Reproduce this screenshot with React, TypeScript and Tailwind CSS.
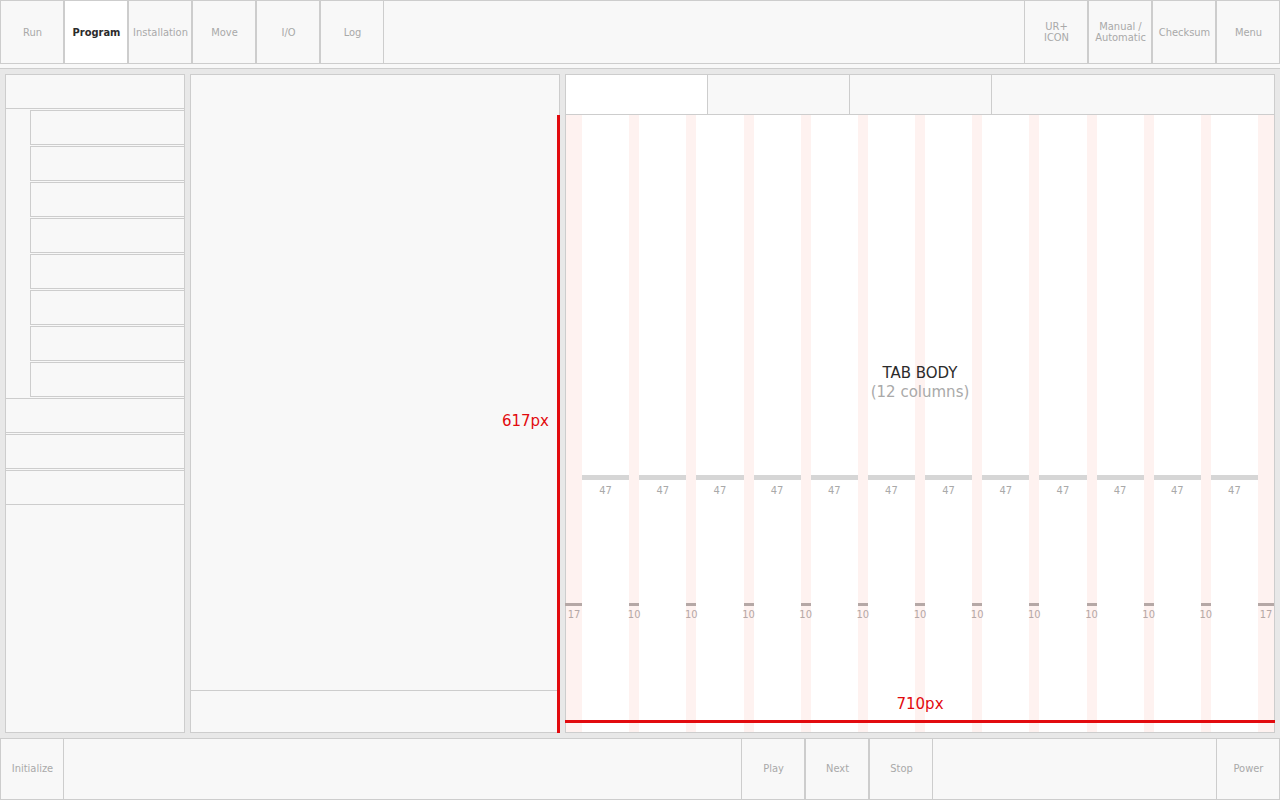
import { Fragment } from "react";
import clsx from "clsx";

const leftTabs = ["Run", "Program", "Installation", "Move", "I/O", "Log"];
const rightTabs = ["UR+\nICON", "Manual /\nAutomatic", "Checksum", "Menu"];
const playback = ["Play", "Next", "Stop"];
const columns = Array.from({ length: 12 }, (_, i) => i);

function BarButton({ label, active = false }: { label: string; active?: boolean }) {
  return (
    <button
      type="button"
      aria-pressed={active}
      className={clsx(
        "flex w-16 shrink-0 items-center justify-center self-stretch whitespace-pre-line border-x border-[#cdcdcd] pl-px text-center text-[11px] leading-[11px]",
        active ? "bg-white font-bold text-[#2b2b2b]" : "text-[#a9a9a9]",
      )}
    >
      {label}
    </button>
  );
}

function Gutter({ value, edge = false }: { value: number; edge?: boolean }) {
  return (
    <div className="flex flex-col items-center bg-[#fef2f0] pt-[488px]">
      <div className={clsx("h-[3px] bg-[#b5a8a6]", edge ? "-ml-px w-[17px]" : "w-full")} />
      <span className="mt-[3px] text-[11px] leading-3 text-[#b5a8a6]">{value}</span>
    </div>
  );
}

function Column() {
  return (
    <div className="flex flex-col items-center pt-[360px]">
      <div className="h-[5px] w-full bg-[#d6d6d6]" />
      <span className="mt-[5px] text-[11px] leading-3 text-[#a9a9a9]">47</span>
    </div>
  );
}

function Tree() {
  return (
    <aside className="flex w-[180px] shrink-0 flex-col border border-[#cdcdcd] bg-[#f8f8f8]">
      <div className="h-[34px] border-b border-[#cdcdcd]" />
      <ul className="ml-6 mt-px flex flex-col gap-px">
        {Array.from({ length: 8 }, (_, i) => (
          <li key={i} className="h-[35px] border-y border-l border-[#cdcdcd]" />
        ))}
      </ul>
      <ul className="mt-px flex flex-col gap-px">
        {Array.from({ length: 3 }, (_, i) => (
          <li key={i} className="h-[35px] border-y border-[#cdcdcd]" />
        ))}
      </ul>
    </aside>
  );
}

function TabPanel() {
  return (
    <section className="flex min-w-0 flex-1 flex-col border border-[#cdcdcd] bg-[#f8f8f8]">
      <div role="tablist" className="flex h-10 border-b border-[#cdcdcd]">
        {[0, 1, 2].map((tab) => (
          <button
            key={tab}
            type="button"
            role="tab"
            aria-label={`Tab ${tab + 1}`}
            aria-selected={tab === 0}
            className={clsx("w-[142px] border-r border-[#cdcdcd]", tab === 0 && "bg-white")}
          />
        ))}
      </div>
      <div className="relative grid flex-1 grid-cols-[16px_repeat(11,minmax(0,1fr)_10px)_minmax(0,1fr)_16px] bg-white">
        <Gutter value={17} edge />
        {columns.map((i) => (
          <Fragment key={i}>
            <Column />
            {i < 11 ? <Gutter value={10} /> : <Gutter value={17} />}
          </Fragment>
        ))}
        <div className="absolute inset-x-0 top-[249px] text-center font-['DejaVu_Sans',sans-serif] text-[15px] leading-[19px]">
          <h1 className="text-[#2b2b2b]">TAB BODY</h1>
          <p className="text-[#a9a9a9]">(12 columns)</p>
        </div>
        <div className="absolute -inset-x-px bottom-[9px] border-b-[3px] border-[#e20a0e] pb-2 text-center font-['DejaVu_Sans',sans-serif] text-[15px] leading-4 text-[#e20a0e]">
          710px
        </div>
      </div>
    </section>
  );
}

export default function App() {
  return (
    <div className="flex min-h-screen flex-col bg-[#e8e8e8] font-['DejaVu_Sans_Condensed','DejaVu_Sans',sans-serif]">
      <header className="border-b border-[#cdcdcd] bg-[#f8f8f8] pb-1">
        <nav className="flex h-16 border-y border-[#cdcdcd]">
          {leftTabs.map((label) => (
            <BarButton key={label} label={label} active={label === "Program"} />
          ))}
          <div className="ml-auto flex">
            {rightTabs.map((label) => (
              <BarButton key={label} label={label} />
            ))}
          </div>
        </nav>
      </header>

      <main className="flex flex-1 gap-[5px] p-[5px]">
        <Tree />
        <section className="relative flex w-[370px] shrink-0 flex-col border border-[#cdcdcd] bg-[#f8f8f8]">
          <div className="flex-1" />
          <div className="h-[42px] border-t border-[#cdcdcd]" />
          <div className="absolute -bottom-px -right-px top-10 flex items-center border-r-[3px] border-[#e20a0e] pb-1.5 pr-2 font-['DejaVu_Sans',sans-serif] text-[15px] leading-4 text-[#e20a0e]">
            617px
          </div>
        </section>
        <TabPanel />
      </main>

      <footer className="flex h-[62px] border-y border-[#cdcdcd] bg-[#f8f8f8] [&_button]:pb-0.5">
        <BarButton label="Initialize" />
        <div className="ml-auto mr-[283px] flex">
          {playback.map((label) => (
            <BarButton key={label} label={label} />
          ))}
        </div>
        <BarButton label="Power" />
      </footer>
    </div>
  );
}
